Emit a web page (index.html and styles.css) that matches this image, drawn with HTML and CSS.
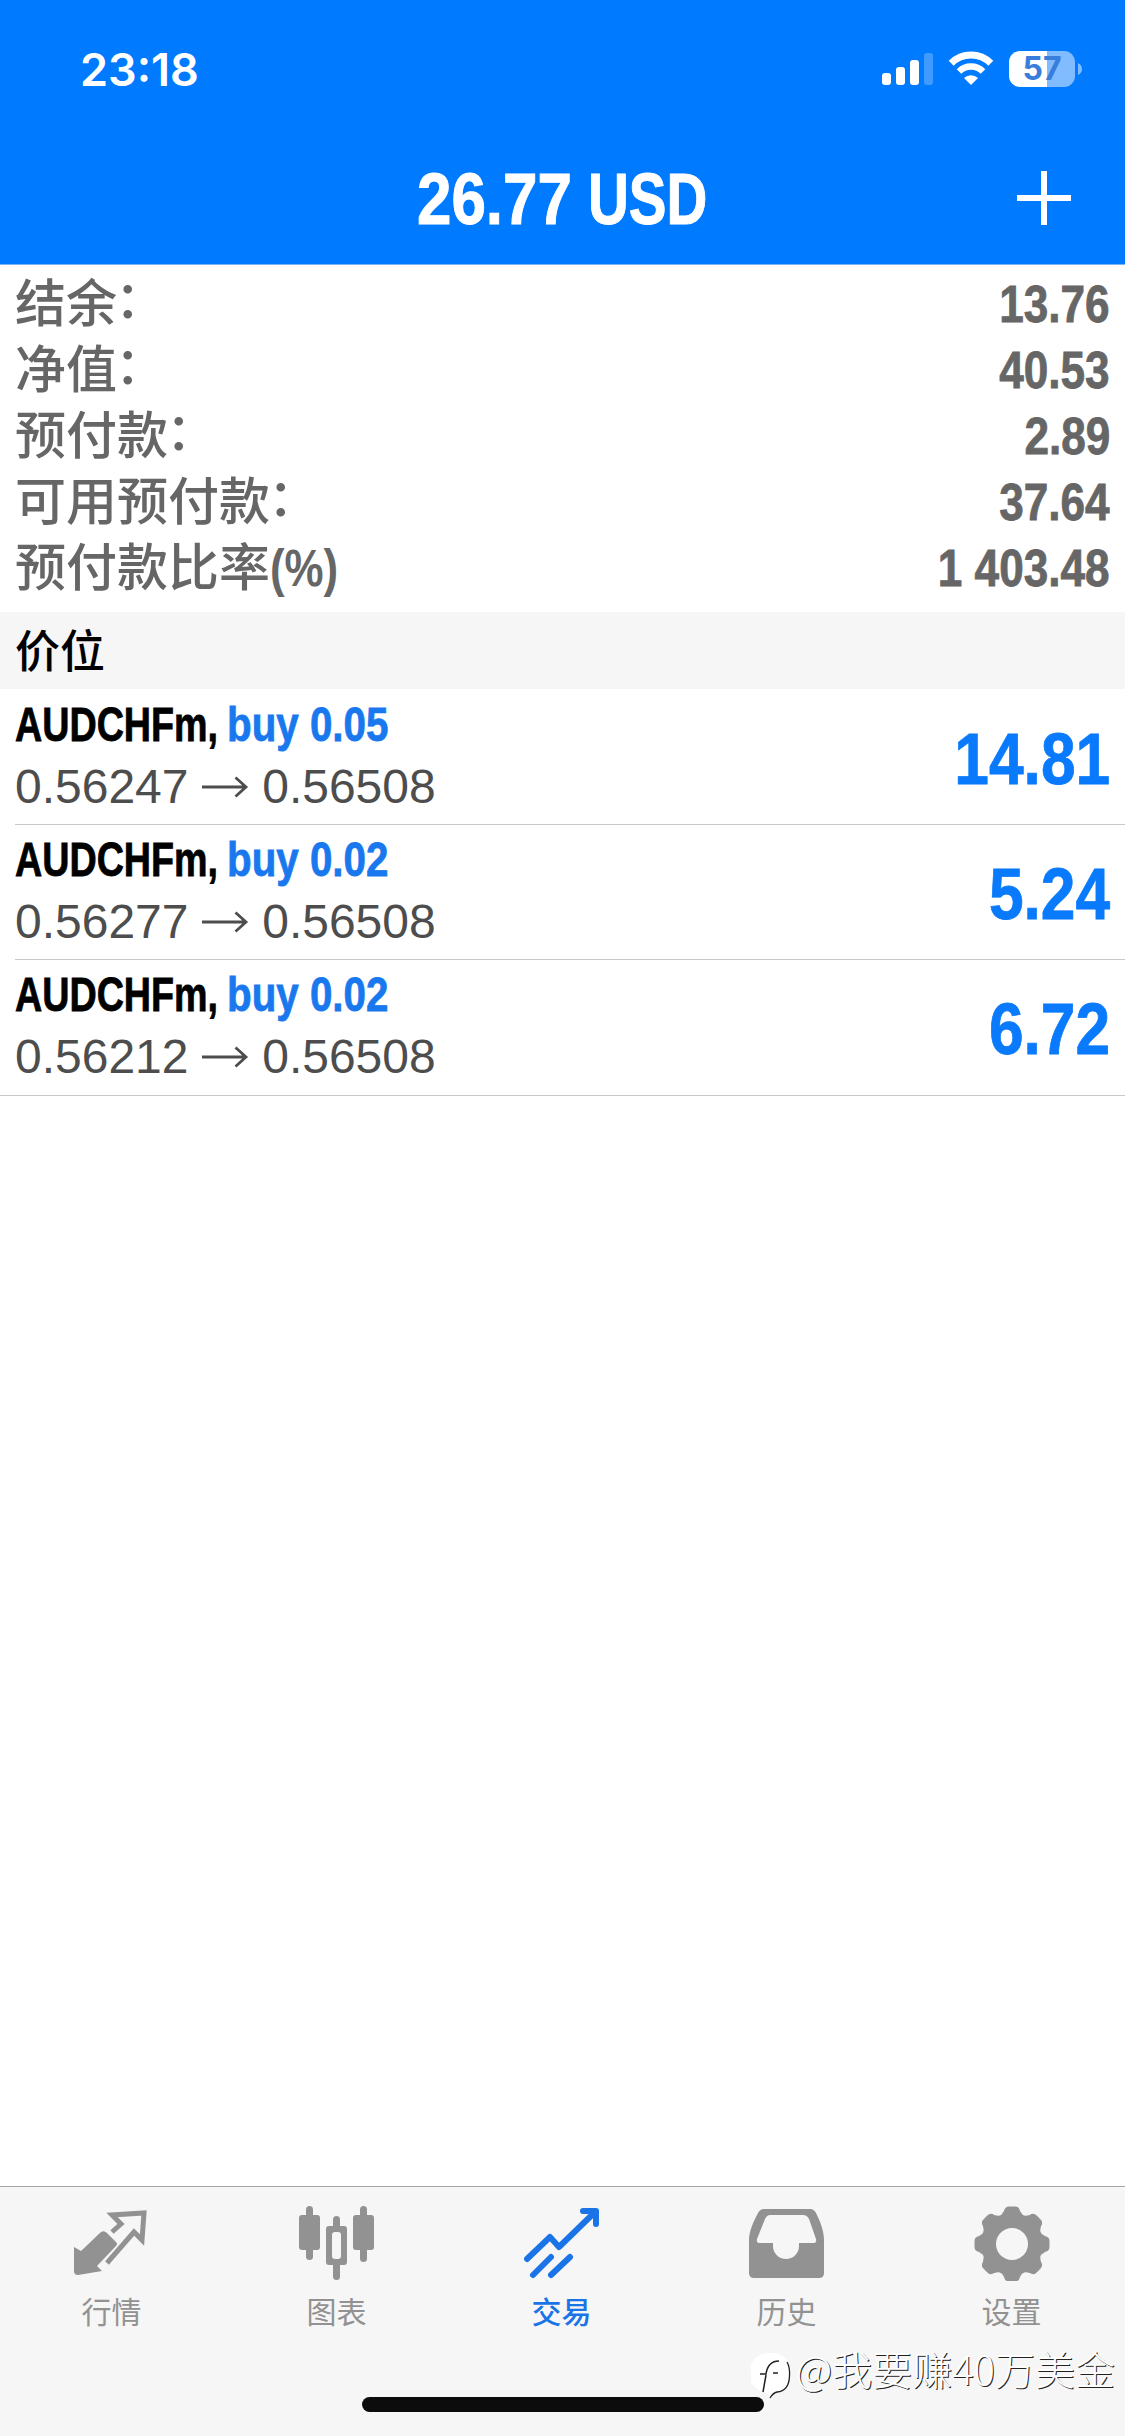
FILE: index.html
```
<!DOCTYPE html>
<html lang="zh-CN">
<head>
<meta charset="utf-8">
<title>交易</title>
<link rel="stylesheet" href="styles.css">
</head>
<body>
<div class="screen">
  <header class="top">
    <div class="status">
      <span class="time">23:18</span>
      <div class="status-icons">
        <svg class="signal" width="51" height="36" viewBox="0 0 51 36" fill="#fff">
          <rect x="0" y="22" width="9" height="12" rx="3"/>
          <rect x="14" y="16" width="9" height="18" rx="3"/>
          <rect x="28" y="9" width="9" height="25" rx="3"/>
          <rect x="42" y="2" width="9" height="32" rx="3" opacity=".25"/>
        </svg>
        <svg class="wifi" width="46" height="36" viewBox="0 0 46 36" fill="none" stroke="#fff">
          <path d="M3.2 12.2A28 28 0 0 1 42.8 12.2" stroke-width="7"/>
          <path d="M11 20.500A17 17 0 0 1 35 20.500" stroke-width="6.5"/>
          <path d="M23 34L16 27A10 10 0 0 1 30 27Z" fill="#fff" stroke="none"/>
        </svg>
        <div class="battery">
          <span class="charge">57</span>
          <svg class="cap" width="4" height="12" viewBox="0 0 4 12"><path d="M0 0Q4 2 4 6Q4 10 0 12Z" fill="#80bcff"/></svg>
        </div>
      </div>
    </div>
    <div class="navbar">
      <h1 class="title"><span class="amount">26.77</span> <span class="currency">USD</span></h1>
      <svg class="plus" width="54" height="54" viewBox="0 0 54 54" stroke="#fff" stroke-width="6"><path d="M27 0V54M0 27H54"/></svg>
    </div>
  </header>

  <section class="summary">
    <div class="line"><span>结余<i class="colon">：</i></span><b class="narrow">13.76</b></div>
    <div class="line"><span>净值<i class="colon">：</i></span><b class="narrow">40.53</b></div>
    <div class="line"><span>预付款<i class="colon">：</i></span><b class="narrow">2.89</b></div>
    <div class="line"><span>可用预付款<i class="colon">：</i></span><b class="narrow">37.64</b></div>
    <div class="line"><span>预付款比率<i class="unit">(%)</i></span><b class="narrow">1 403.48</b></div>
  </section>

  <h2 class="section-title">价位</h2>

  <ul class="positions">
    <li class="position">
      <div class="deal">
        <div class="symbol"><span class="name">AUDCHFm,</span><span class="side">buy 0.05</span></div>
        <div class="prices">0.56247 <svg class="arrow" viewBox="0 0 47 24"><path d="M0 12H44M33.500 2.500L44 12L33.500 21.500"/></svg> 0.56508</div>
      </div>
      <b class="profit narrow">14.81</b>
    </li>
    <li class="position">
      <div class="deal">
        <div class="symbol"><span class="name">AUDCHFm,</span><span class="side">buy 0.02</span></div>
        <div class="prices">0.56277 <svg class="arrow" viewBox="0 0 47 24"><path d="M0 12H44M33.500 2.500L44 12L33.500 21.500"/></svg> 0.56508</div>
      </div>
      <b class="profit narrow">5.24</b>
    </li>
    <li class="position">
      <div class="deal">
        <div class="symbol"><span class="name">AUDCHFm,</span><span class="side">buy 0.02</span></div>
        <div class="prices">0.56212 <svg class="arrow" viewBox="0 0 47 24"><path d="M0 12H44M33.500 2.500L44 12L33.500 21.500"/></svg> 0.56508</div>
      </div>
      <b class="profit narrow">6.72</b>
    </li>
  </ul>

  <nav class="tabs">
    <a class="tab">
      <svg class="icon" viewBox="0 0 76 76">
        <path d="M0 42L7 46L27 27Q30 25 33 28L42 37Q44 39 42 41L23 61L28 66L4 70Q0 70 0 66Z" fill="currentColor"/>
        <path d="M38 27L47 19L38 10L70 8L68 35L60 27L33 58" fill="none" stroke="currentColor" stroke-width="5"/>
      </svg>
      <span>行情</span>
    </a>
    <a class="tab">
      <svg class="icon" viewBox="0 0 76 76" fill="currentColor">
        <rect x="7" y="1" width="7" height="54" rx="3.500"/><rect y="10" width="21" height="35" rx="3"/>
        <rect x="61" y="1" width="7" height="56" rx="3.500"/><rect x="54" y="10" width="21" height="35" rx="3"/>
        <rect x="34" y="11" width="7" height="64" rx="3.500"/><rect x="27" y="21" width="21" height="39" rx="3"/>
        <rect x="33" y="27" width="9" height="27" rx="3" fill="#f6f6f6"/>
      </svg>
      <span>图表</span>
    </a>
    <a class="tab active">
      <svg class="icon" viewBox="0 0 76 76" fill="none" stroke="currentColor" stroke-width="6" stroke-linecap="round" stroke-linejoin="round">
        <path d="M3 54L26 32L35 42L71 7M59 6H72V19"/>
        <path d="M9 70L27 52M27 70L46 52"/>
      </svg>
      <span>交易</span>
    </a>
    <a class="tab">
      <svg class="icon" viewBox="0 0 76 76">
        <path fill="currentColor" fill-rule="evenodd" d="M15 4H61Q65 4 67 8C72 18 75 27 75 35V68Q75 73 70 73H5Q0 73 0 68V35C0 27 4 17 9 8Q11 4 15 4ZM21 10Q18 10 16 14L8 34Q7 38 11 38H24V41A13 13 0 0 0 50 41V38H64Q68 38 67 34L60 14Q58 10 54 10Z"/>
      </svg>
      <span>历史</span>
    </a>
    <a class="tab">
      <svg class="icon" viewBox="-38 -39 76 76">
        <g fill="currentColor">
          <circle r="29"/>
          <path id="tooth" d="M-14 -27Q-10 -29 -8 -33Q-7 -37.500 -3 -37.500H3Q7 -37.500 8 -33Q10 -29 14 -27L8 -12H-8Z"/>
          <use href="#tooth" transform="rotate(45)"/><use href="#tooth" transform="rotate(90)"/>
          <use href="#tooth" transform="rotate(135)"/><use href="#tooth" transform="rotate(180)"/>
          <use href="#tooth" transform="rotate(225)"/><use href="#tooth" transform="rotate(270)"/>
          <use href="#tooth" transform="rotate(315)"/>
        </g>
        <circle r="16" fill="#f6f6f6"/>
      </svg>
      <span>设置</span>
    </a>
  </nav>
  <div class="home-bar"></div>
  <div class="watermark">
    <svg class="mark" width="42" height="48" viewBox="0 0 42 48">
      <path d="M20 0A20 20 0 0 0 2 32Q6 38 16 40L20 45L26 40Q39 38 39 20Q39 0 20 0Z" fill="#fff"/>
      <g fill="none" stroke="#222">
        <path d="M12 39L15 22M9 21H15Q17 8 28 8" stroke-width="1.500"/>
        <path d="M22 20H27" stroke-width="1.500"/>
        <path d="M36 9Q39 14 38.500 23Q38 38 26 39Q22 40 19 45" stroke-width="1.300"/>
      </g>
    </svg>
    <span>@我要赚40万美金</span>
  </div>
</div>
</body>
</html>
```
FILE: styles.css
```
* { box-sizing: border-box; }

body {
  margin: 0;
  background: #fff;
  font-family: "Liberation Sans", "Noto Sans CJK SC", sans-serif;
}

.screen {
  position: relative;
  display: flex;
  flex-direction: column;
  width: 1125px;
  height: 2436px;
  overflow: hidden;
}

/* condensed bold numerals */
.narrow {
  display: inline-block;
  transform: scaleX(.865);
  transform-origin: right center;
  font-weight: 700;
  white-space: pre;
  -webkit-text-stroke: .8px currentColor;
}

.top {
  height: 265px;
  background: #007aff;
  border-bottom: 1px solid #7ab4f5;
  color: #fff;
}

.status {
  display: flex;
  justify-content: space-between;
  height: 132px;
  padding: 0 43px 0 80px;
}

.time {
  padding-top: 43px;
  font: 600 45px/54px Inter, sans-serif;
}

.status-icons {
  display: flex;
  gap: 15px;
  padding-top: 51px;
}

.battery {
  display: flex;
  align-items: center;
  gap: 3px;
  height: 36px;
}

.charge {
  width: 66px;
  height: 36px;
  border-radius: 11px;
  background: linear-gradient(90deg, #fff 38px, #80bcff 38px);
  color: #3a7edb;
  font: 700 32px/36px Inter, sans-serif;
  text-align: center;
}

.navbar {
  display: grid;
  grid-template-columns: 1fr auto 1fr;
  align-items: center;
  height: 132px;
  padding-right: 54px;
}

.title {
  display: flex;
  grid-column: 2;
  width: 291px;
  margin: 2px -54px 0 0;
  font-size: 72px;
  line-height: 80px;
  -webkit-text-stroke: 1px currentColor;
}

.amount {
  width: 171px;
  transform: scaleX(.86);
  transform-origin: left;
}

.currency {
  transform: scaleX(.785);
  transform-origin: left;
}

.plus {
  grid-column: 3;
  justify-self: end;
}

.summary {
  height: 347px;
  padding: 7px 15px 0;
  color: #666;
  font-size: 51px;
}

.line {
  display: flex;
  justify-content: space-between;
  height: 66px;
  line-height: 66px;
  font-weight: 500;
}

.colon {
  position: relative;
  top: -4px;
  left: -2px;
  font-style: normal;
}

.unit {
  display: inline-block;
  transform: scaleX(.86);
  transform-origin: left;
  font-style: normal;
  font-weight: 700;
}

.section-title {
  height: 77px;
  margin: 0;
  padding: 2px 0 0 15px;
  background: #f6f6f6;
  color: #000;
  font-size: 45px;
  font-weight: 500;
  line-height: 77px;
}

.positions {
  margin: 0;
  padding: 0;
  list-style: none;
}

.position {
  display: flex;
  justify-content: space-between;
  height: 135px;
  margin-left: 15px;
  padding-right: 15px;
  border-bottom: 1px solid #c8c8c8;
}

.position:first-child {
  height: 136px;
  padding-top: 1px;
}

.position:last-child {
  height: 136px;
  margin-left: 0;
  padding-left: 15px;
}

.deal { padding-top: 4px; }

.symbol {
  display: flex;
  height: 61px;
  font-size: 48px;
  font-weight: 700;
  line-height: 61px;
  -webkit-text-stroke: .8px currentColor;
}

.name {
  width: 212px;
  transform: scaleX(.785);
  transform-origin: left;
}

.side {
  color: #1a78ee;
  transform: scaleX(.84);
  transform-origin: left;
  white-space: pre;
}

.prices {
  color: #4d4d4d;
  font-size: 48px;
  line-height: 64px;
  white-space: pre;
}

.arrow {
  width: 47px;
  height: 24px;
  margin-bottom: 4px;
  fill: none;
  stroke: #4d4d4d;
  stroke-width: 2.8px;
}

.profit {
  color: #0a7afc;
  font-size: 72px;
  line-height: 138px;
}

.tabs {
  display: flex;
  height: 250px;
  margin-top: auto;
  background: #f6f6f6;
  border-top: 1px solid #a6a6a6;
}

.tab {
  display: flex;
  flex: 1;
  flex-direction: column;
  align-items: center;
  padding-top: 18px;
  padding-right: 2px;
  color: #929292;
  font-size: 30px;
  line-height: 40px;
}

.icon {
  width: 76px;
  height: 76px;
  margin-bottom: 12px;
}

.active {
  color: #1a74e8;
  font-weight: 500;
}

.home-bar {
  position: absolute;
  top: 2397px;
  left: 362px;
  width: 402px;
  height: 15px;
  border-radius: 8px;
  background: #0c0c0c;
}

.watermark {
  position: absolute;
  top: 2343px;
  right: 10px;
  display: flex;
  gap: 3px;
  color: #fff;
  font: 300 40px/50px "Noto Sans CJK SC", sans-serif;
  text-shadow: 1px 1px 0 #222;
}

.mark { margin-top: 10px; }
```
